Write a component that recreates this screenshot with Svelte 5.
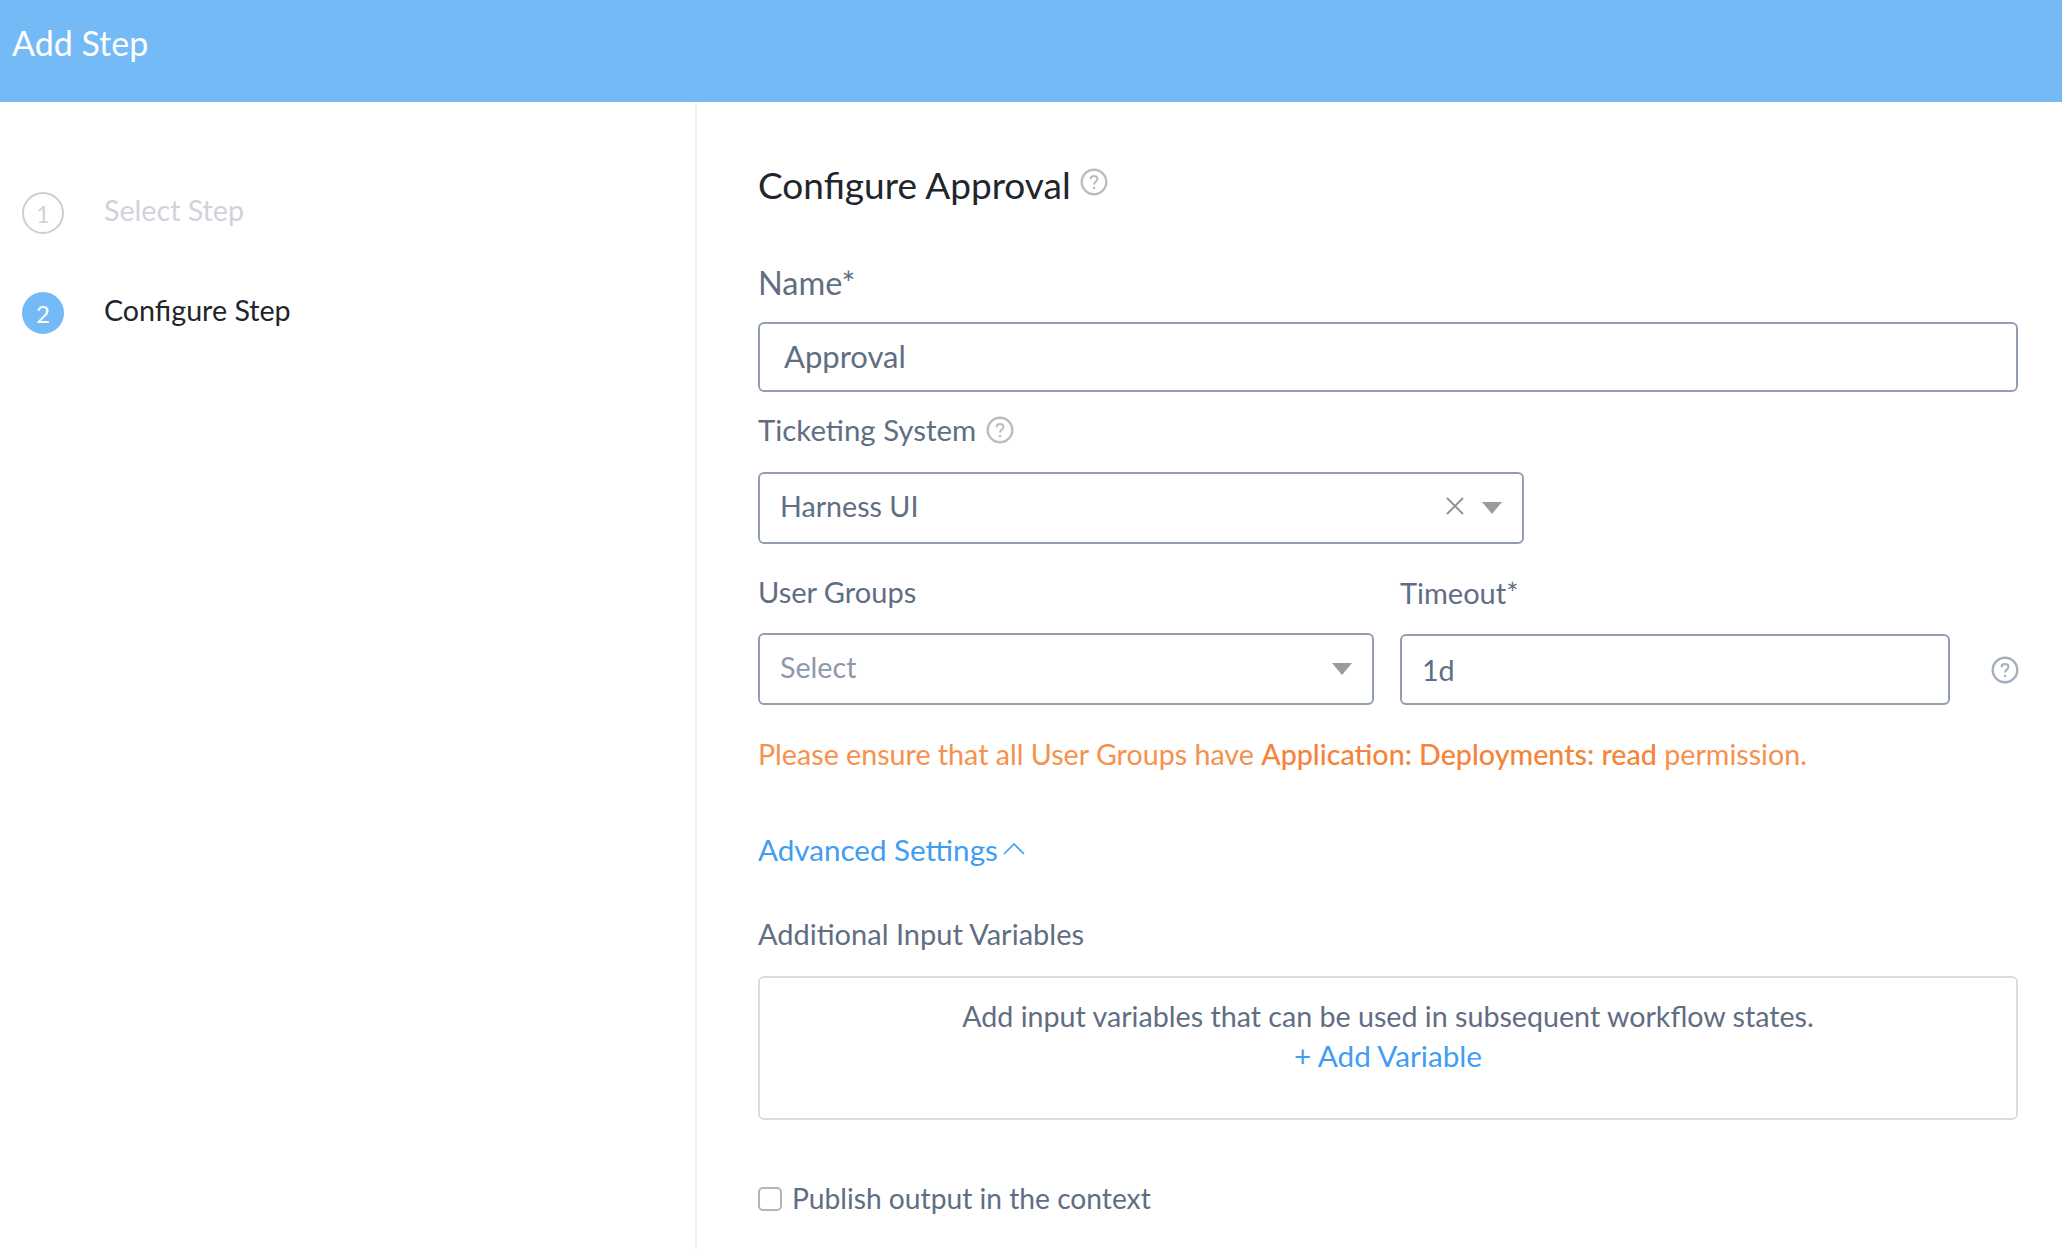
<script>
  let steps = [
    { id: 1, label: 'Select Step', active: false },
    { id: 2, label: 'Configure Step', active: true }
  ];
</script>

{#snippet help(cls = '')}
  <svg class="help {cls}" viewBox="0 0 28 28" aria-hidden="true">
    <circle cx="14" cy="14" r="12.3" fill="none" stroke="currentColor" stroke-width="2.4" />
    <path d="M10.6 11.2c0-2 1.5-3.2 3.4-3.2s3.4 1.2 3.4 3c0 2.6-3.3 2.7-3.3 5.4" fill="none" stroke="currentColor" stroke-width="2" />
    <circle cx="14.1" cy="20" r="1.3" fill="currentColor" />
  </svg>
{/snippet}

{#snippet caret()}
  <svg class="caret" viewBox="0 0 20 12" aria-hidden="true"><path d="M0 0h20L10 12z" fill="#9b9b9b" /></svg>
{/snippet}

<div class="page">
  <header class="header">Add Step</header>
  <div class="body">
    <aside class="sidebar">
      {#each steps as step}
        <div class="step" class:active={step.active}>
          <span class="num">{step.id}</span>
          <span class="step-label">{step.label}</span>
        </div>
      {/each}
    </aside>

    <main class="main">
      <h1 class="title">Configure Approval {@render help('title-help')}</h1>

      <label class="label name-label" for="name">Name*</label>
      <input id="name" class="input name-input" value="Approval" />

      <div class="label ticket-label">Ticketing System {@render help('gray')}</div>
      <div class="select ticket-select">
        <span class="value">Harness UI</span>
        <svg class="clear" viewBox="0 0 20 20" aria-hidden="true"><path d="M2 2l16 16M18 2L2 18" stroke="#8f8f8f" stroke-width="1.8" fill="none" /></svg>
        {@render caret()}
      </div>

      <div class="row">
        <div class="col groups">
          <div class="label">User Groups</div>
          <div class="select">
            <span class="placeholder">Select</span>
            {@render caret()}
          </div>
        </div>
        <div class="col timeout">
          <label class="label" for="timeout">Timeout*</label>
          <input id="timeout" class="input" value="1d" />
        </div>
        {@render help('timeout-help')}
      </div>

      <p class="warning">Please ensure that all User Groups have <b>Application: Deployments: read</b> permission.</p>

      <div class="advanced">
        Advanced Settings
        <svg viewBox="0 0 22 12" aria-hidden="true"><path d="M1 11l10-10 10 10" fill="none" stroke="currentColor" stroke-width="1.6" /></svg>
      </div>

      <div class="label vars-label">Additional Input Variables</div>
      <div class="vars">
        <div>Add input variables that can be used in subsequent workflow states.</div>
        <div class="add">+ Add Variable</div>
      </div>

      <label class="publish">
        <input type="checkbox" />
        <span>Publish output in the context</span>
      </label>
    </main>
  </div>
</div>

<style>
  :global(body) {
    margin: 0;
    background: #fff;
    overflow: hidden;
  }

  .page {
    height: 1250px;
    display: flex;
    flex-direction: column;
    font-family: Lato, "Open Sans", sans-serif;
    font-size: 28.65px;
    color: #5f6e83;
  }

  .header {
    height: 102px;
    flex: none;
    box-sizing: border-box;
    padding: 23px 0 0 12px;
    background: #74baf7;
    color: #fff;
    font-size: 34px;
    line-height: 40px;
  }

  .body {
    flex: 1;
    display: flex;
    min-height: 0;
  }

  .sidebar {
    width: 697px;
    flex: none;
    box-sizing: border-box;
    border-right: 2px solid #f1f2f4;
    padding: 90px 0 0 22px;
    display: flex;
    flex-direction: column;
    gap: 58px;
  }

  .step {
    display: flex;
    align-items: center;
    gap: 40px;
    height: 42px;
    color: #cfd3da;
  }

  .step.active {
    color: #22252b;
  }

  .step-label {
    position: relative;
    top: -3px;
  }

  .num {
    width: 42px;
    height: 42px;
    flex: none;
    box-sizing: border-box;
    border: 2px solid #c9ced7;
    border-radius: 50%;
    display: flex;
    align-items: center;
    justify-content: center;
    font-size: 24px;
  }

  .active .num {
    background: #74baf7;
    border-color: #74baf7;
    color: #fff;
  }

  .main {
    flex: 1;
    min-width: 0;
    box-sizing: border-box;
    padding: 0 44px 0 61px;
  }

  .title {
    margin: 60px 0 0;
    height: 46px;
    display: flex;
    align-items: center;
    font-size: 37px;
    line-height: 46px;
    font-weight: 400;
    color: #22252b;
  }

  .help {
    width: 28px;
    height: 28px;
    flex: none;
    color: #bdbdbd;
  }

  .title-help {
    margin: -6px 0 0 9px;
  }

  .gray {
    margin-left: 10px;
  }

  .label {
    display: flex;
    align-items: center;
    height: 36px;
    line-height: 36px;
    color: #5f6e83;
    font-size: 29px;
  }

  .name-label {
    margin-top: 57px;
    font-size: 32.5px;
  }

  .input,
  .select {
    box-sizing: border-box;
    width: 100%;
    border: 2px solid #939fb0;
    border-radius: 6px;
    background: #fff;
    color: #5f6e83;
    font: inherit;
  }

  .input {
    height: 71px;
    padding: 0 20px;
    outline: none;
  }

  .name-input {
    display: block;
    height: 70px;
    margin-top: 21px;
    padding: 0 24px 2px;
    font-size: 31px;
  }

  .ticket-label {
    margin-top: 20px;
    font-size: 29.4px;
  }

  .select {
    height: 72px;
    display: flex;
    align-items: center;
    padding: 0 20px;
  }

  .select .value,
  .select .placeholder {
    flex: 1;
    position: relative;
    top: -2px;
  }

  .placeholder {
    color: #8d98a8;
  }

  .ticket-select {
    width: 766px;
    margin-top: 24px;
  }

  .clear {
    width: 20px;
    height: 20px;
    margin: -4px 17px 0 0;
  }

  .caret {
    width: 20px;
    height: 12px;
  }

  .row {
    display: flex;
    align-items: flex-end;
    margin-top: 30px;
  }

  .col .label {
    margin-bottom: 23px;
  }

  .groups {
    width: 616px;
    flex: none;
  }

  .timeout {
    width: 550px;
    flex: none;
    margin-left: 26px;
  }

  .timeout-help {
    color: #a3afbf;
    margin: 0 0 21px 41px;
  }

  .warning {
    margin: 31px 0 0;
    line-height: 36px;
    color: #f6914d;
  }

  .warning b {
    font-weight: 500;
    color: #f58338;
  }

  .advanced {
    display: flex;
    align-items: center;
    margin-top: 60px;
    height: 36px;
    line-height: 36px;
    color: #3f9df2;
    font-size: 29.6px;
  }

  .advanced svg {
    width: 22px;
    height: 12px;
    margin: -2px 0 0 5px;
  }

  .vars-label {
    margin-top: 48px;
  }

  .vars {
    box-sizing: border-box;
    height: 144px;
    margin-top: 24px;
    border: 2px solid #d9dce3;
    border-radius: 6px;
    padding: 18px 0 0;
    text-align: center;
    line-height: 40px;
  }

  .add {
    color: #3f9df2;
    font-size: 29.7px;
  }

  .publish {
    display: flex;
    align-items: center;
    gap: 10px;
    margin-top: 61px;
    height: 36px;
    font-size: 28.2px;
  }

  .publish span {
    margin-top: -2px;
  }

  .publish input {
    appearance: none;
    width: 24px;
    height: 24px;
    margin: 0;
    box-sizing: border-box;
    border: 2px solid #b5b5b5;
    border-radius: 5px;
    background: #fff;
  }
</style>
